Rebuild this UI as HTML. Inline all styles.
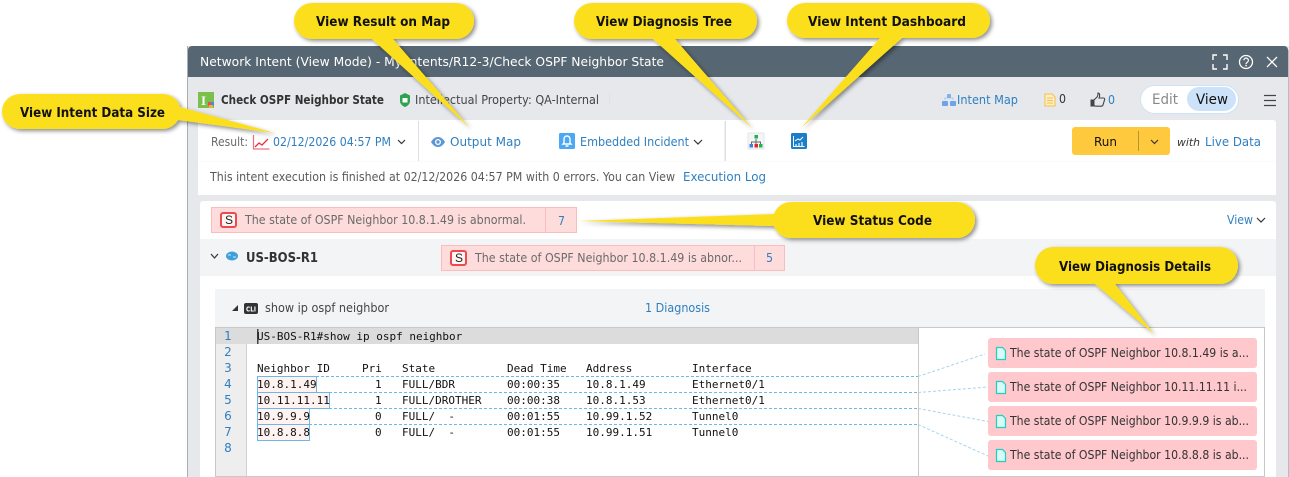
<!DOCTYPE html>
<html lang="en"><head><meta charset="utf-8"><title>Network Intent</title>
<style>
html,body{margin:0;padding:0;background:#fff;width:1289px;height:477px;overflow:hidden}
svg{display:block}
text{font-family:"DejaVu Sans","Liberation Sans",sans-serif;font-size:12px;fill:#444;white-space:pre}
.b{fill:#2f7fc0}
.w{fill:#fff}
.g6{fill:#6a6a6a}
.g5{fill:#5a5a5a}
.g3{fill:#333}
.h{font-weight:bold;fill:#333}
.c{font-weight:bold;fill:#111;font-size:13px}
.m{font-family:"DejaVu Sans Mono","Liberation Mono",monospace;font-size:11px;fill:#111}
.n{fill:#2f7fc0;font-size:12px;text-anchor:middle}
.ch{fill:none;stroke:#333;stroke-width:1.2}
</style></head>
<body>
<svg width="1289" height="477" viewBox="0 0 1289 477" xmlns="http://www.w3.org/2000/svg">
<defs><filter id="s" x="-10%" y="-20%" width="125%" height="150%"><feDropShadow dx="2" dy="2" stdDeviation="2" flood-color="#000" flood-opacity=".45"/></filter></defs>
<rect x="187" y="46" width="1102" height="431" fill="#e6e8ec"/>
<rect x="187" y="46" width="1" height="431" fill="#a9aeb3"/>
<path d="M188 77V50a4 4 0 0 1 4-4H1284a4 4 0 0 1 4 4V77Z" fill="#566672"/>
<rect x="1288" y="50" width="1" height="427" fill="#b8bcc0"/>
<text class="w" x="200" y="66" textLength="464" lengthAdjust="spacingAndGlyphs">Network Intent (View Mode) - My Intents/R12-3/Check OSPF Neighbor State</text>
<path d="M1213 60v-5h4M1223 55h4v5M1227 64v5h-4M1217 69h-4v-5" fill="none" stroke="#fff" stroke-width="1.4"/>
<circle cx="1246" cy="62" r="6.5" fill="none" stroke="#fff" stroke-width="1.3"/>
<path d="M1243.800 60.300a2.300 2.300 0 1 1 3.500 2c-.9.6-1.300 1-1.300 2" fill="none" stroke="#fff" stroke-width="1.200"/><rect x="1245.300" y="65" width="1.400" height="1.400" fill="#fff"/>
<path d="M1267 57l10 10M1277 57l-10 10" stroke="#fff" stroke-width="1.300"/>

<rect x="198" y="92" width="16" height="16" fill="#7cc04c"/>
<text x="201" y="105" style="font-family:'Liberation Serif',serif;font-weight:bold;font-size:13px;fill:#fff">I</text>
<rect x="208" y="102" width="3" height="4" fill="#ef4b5c"/><rect x="211" y="102" width="3" height="4" fill="#3f8fe0"/><rect x="209" y="105" width="4" height="3" fill="#f3b12c"/>
<text class="h" x="221" y="104" textLength="163" lengthAdjust="spacingAndGlyphs">Check OSPF Neighbor State</text>
<path d="M405 93l5 2.500v5.500c0 3-2.500 5-5 6-2.500-1-5-3-5-6v-5.500z" fill="#2ea34f"/><rect x="402.500" y="98" width="5" height="4.500" fill="#fff"/>
<text x="415" y="104" textLength="184" lengthAdjust="spacingAndGlyphs">Intellectual Property: QA-Internal</text>
<rect x="609" y="93" width="1" height="11" fill="#e0e2e6"/>
<path d="M945 100v-2h8v2" fill="none" stroke="#a9c8ee"/><rect x="947" y="94" width="4" height="4" rx="1" fill="#7fb0ea"/><rect x="942" y="101" width="6" height="5" rx="1" fill="#6ea5e8"/><rect x="950" y="101" width="6" height="5" rx="1" fill="#6ea5e8"/>
<text class="b" x="957" y="104" textLength="61" lengthAdjust="spacingAndGlyphs">Intent Map</text>
<path d="M1045 94h7l3 3v9h-10z" fill="#fdf0c4" stroke="#f2bf4a"/><path d="M1047 98h6M1047 100.500h6M1047 103h6" stroke="#f2bf4a"/>
<text class="g3" x="1059" y="103" textLength="7" lengthAdjust="spacingAndGlyphs">0</text>
<path d="M1091 100h3v6h-3z" fill="#444" stroke="#444"/><path d="M1094 100l3-3c1-1 1-3 1-4 2 0 2 3 1 5h4.500c1 0 1.500 1 1 2l-1.500 5c-.3.800-1 1.200-2 1.200h-5c-1 0-2-.5-3-1.200" fill="none" stroke="#444" stroke-width="1.100"/>
<text class="b" x="1108" y="104" textLength="7" lengthAdjust="spacingAndGlyphs">0</text>
<rect x="1140.500" y="85.500" width="98" height="28" rx="14" fill="#fff" stroke="#cfe3f7"/>
<rect x="1187" y="87" width="49" height="24" rx="12" fill="#cbe2f8"/>
<text x="1152" y="104" textLength="26" lengthAdjust="spacingAndGlyphs" style="font-size:14px;fill:#888">Edit</text>
<text x="1196" y="104" textLength="32" lengthAdjust="spacingAndGlyphs" style="font-size:14px;fill:#111">View</text>
<path d="M1264 95.500h12M1264 100.500h12M1264 105.500h12" stroke="#444" stroke-width="1.300"/>

<path d="M198 161V123a3 3 0 0 1 3-3H1273a3 3 0 0 1 3 3V161Z" fill="#fff"/>
<rect x="198" y="162" width="1078" height="33" fill="#fff"/>
<rect x="198" y="161" width="1078" height="1" fill="#fafafa"/>
<text class="g6" x="211" y="146" textLength="37" lengthAdjust="spacingAndGlyphs">Result:</text>
<rect x="253" y="134" width="16" height="16" fill="#fff"/>
<path d="M253.500 135v14h16" fill="none" stroke="#f0707a" stroke-width="1.200"/><path d="M255 147l4-4 3 2 6-6" fill="none" stroke="#e8303f" stroke-width="1.300"/>
<text class="b" x="273" y="146" textLength="118" lengthAdjust="spacingAndGlyphs">02/12/2026 04:57 PM</text>
<path class="ch" d="M398 140l3.500 3.500 3.500-3.500"/>
<rect x="418" y="121" width="1" height="40" fill="#dddfe2"/>
<path d="M431 142c2-3.500 4.500-5 7-5s5 1.500 7 5c-2 3.500-4.500 5-7 5s-5-1.500-7-5z" fill="#5c96d6"/><circle cx="438" cy="142" r="3" fill="#fff"/><circle cx="438" cy="142" r="1.700" fill="#5c96d6"/>
<text class="b" x="450" y="146" textLength="71" lengthAdjust="spacingAndGlyphs">Output Map</text>
<rect x="559" y="133" width="16" height="16" rx="1.500" fill="#4aa8f5"/>
<path d="M564 143v-4a3 3 0 0 1 6 0v4l1 1h-8zM565.500 146h3" fill="none" stroke="#fff" stroke-width="1.400"/>
<text class="b" x="580" y="146" textLength="109" lengthAdjust="spacingAndGlyphs">Embedded Incident</text>
<path class="ch" d="M694 140l4 4 4-4"/>
<rect x="724.500" y="121" width="1.500" height="40" fill="#dddfe2"/>
<rect x="748" y="133" width="16" height="16" rx="1" fill="#f3f5f7" stroke="#e2e4e8"/>
<path d="M756 139v3M751.500 145v-3h9v3M756 142v3" fill="none" stroke="#666"/>
<rect x="754.500" y="135" width="3.500" height="3.500" fill="#22b14c"/><rect x="749.500" y="144" width="3.500" height="3.500" fill="#3f7fe0"/><rect x="754.500" y="144" width="3.500" height="3.500" fill="#e8202a"/><rect x="759" y="144" width="3.500" height="3.500" fill="#22b14c"/>
<rect x="791" y="133" width="16" height="16" rx="1.500" fill="#1b7ec8"/>
<path d="M793.500 136v10.500h11" fill="none" stroke="#fff"/><path d="M795 141l3-2 2 1 3-3" fill="none" stroke="#fff"/><path d="M796 146v-2M799 146v-3M802 146v-4" stroke="#bfe0f7" stroke-width="1.500"/>
<rect x="1072" y="127" width="98" height="28" rx="3" fill="#fec93c"/>
<rect x="1138" y="131" width="1" height="20" fill="#b8962e"/>
<text x="1094" y="146" textLength="23" lengthAdjust="spacingAndGlyphs" style="fill:#111">Run</text>
<path class="ch" d="M1151 140l3.500 3.500 3.500-3.500"/>
<text x="1177" y="146" textLength="23" lengthAdjust="spacingAndGlyphs" style="font-style:italic;font-size:11px;fill:#333">with</text>
<text class="b" x="1205" y="146" textLength="56" lengthAdjust="spacingAndGlyphs">Live Data</text>
<text class="g5" x="210" y="181" textLength="465" lengthAdjust="spacingAndGlyphs">This intent execution is finished at 02/12/2026 04:57 PM with 0 errors. You can View</text>
<text class="b" x="683" y="181" textLength="83" lengthAdjust="spacingAndGlyphs">Execution Log</text>

<path d="M200 239V204a3 3 0 0 1 3-3H1273a3 3 0 0 1 3 3V239Z" fill="#fff"/>
<rect x="200" y="239" width="1076" height="37" fill="#f3f4f6"/>
<rect x="200" y="276" width="1076" height="201" fill="#fff"/>
<rect x="211.500" y="207.500" width="365" height="25" fill="#ffdcdc" stroke="#fbbcbc"/>
<rect x="545" y="208" width="1" height="24" fill="#fbbcbc"/>
<rect x="221" y="213" width="15" height="14" rx="2" fill="#fff5f5" stroke="#f0484f" stroke-width="2"/>
<text x="225" y="224" style="font-family:'Liberation Sans',sans-serif;font-size:12px;fill:#222">S</text>
<text class="g6" x="245" y="224" textLength="281" lengthAdjust="spacingAndGlyphs">The state of OSPF Neighbor 10.8.1.49 is abnormal.</text>
<text class="b" x="558" y="225" textLength="7" lengthAdjust="spacingAndGlyphs">7</text>
<text class="b" x="1227" y="224" textLength="26" lengthAdjust="spacingAndGlyphs">View</text>
<path class="ch" d="M1257 218l4 4 4-4"/>

<path class="ch" d="M211 254l3.500 4 3.500-4"/>
<ellipse cx="232" cy="256" rx="6" ry="4.500" fill="#3f9fdc"/><path d="M228 255h3M233 257h3" stroke="#cfeafa"/>
<text class="h" x="246" y="262" textLength="72" lengthAdjust="spacingAndGlyphs" style="font-size:13.500px">US-BOS-R1</text>
<rect x="441.500" y="245.500" width="343" height="25" fill="#ffdcdc" stroke="#fbbcbc"/>
<rect x="754" y="246" width="1" height="24" fill="#fbbcbc"/>
<rect x="451" y="251" width="15" height="14" rx="2" fill="#fff5f5" stroke="#f0484f" stroke-width="2"/>
<text x="455" y="262" style="font-family:'Liberation Sans',sans-serif;font-size:12px;fill:#222">S</text>
<text class="g6" x="475" y="262" textLength="267" lengthAdjust="spacingAndGlyphs">The state of OSPF Neighbor 10.8.1.49 is abnor...</text>
<text class="b" x="766" y="262" textLength="7" lengthAdjust="spacingAndGlyphs">5</text>

<rect x="215" y="289" width="1050" height="38" fill="#f3f4f6"/>
<path d="M232 311l6-6v6z" fill="#333"/>
<rect x="244" y="303" width="14" height="11" rx="2" fill="#333"/>
<text x="246" y="311.500" textLength="10" lengthAdjust="spacingAndGlyphs" style="font-size:7px;font-weight:bold;fill:#fff">CLI</text>
<text x="265" y="312" textLength="124" lengthAdjust="spacingAndGlyphs">show ip ospf neighbor</text>
<text class="b" x="645" y="312" textLength="65" lengthAdjust="spacingAndGlyphs">1 Diagnosis</text>

<rect x="215.500" y="327.500" width="1049" height="149" fill="#fff" stroke="#c8c8c8"/>
<rect x="216" y="328" width="31" height="148" fill="#eeeeee"/>
<rect x="246" y="328" width="1" height="148" fill="#d0d0d0"/>
<rect x="216" y="328" width="702" height="16" fill="#dcdcdc"/>
<rect x="918" y="328" width="1" height="148" fill="#c8c8c8"/>
<rect x="257" y="329" width="1.500" height="15" fill="#444"/>
<text class="n" x="228" y="340">1</text><text class="n" x="228" y="356">2</text><text class="n" x="228" y="372">3</text><text class="n" x="228" y="388">4</text><text class="n" x="228" y="404">5</text><text class="n" x="228" y="420">6</text><text class="n" x="228" y="436">7</text><text class="n" x="228" y="452">8</text>

<rect x="257.500" y="376.500" width="59" height="16" fill="#fff3f1" stroke="#6fb7e6"/>
<rect x="257.500" y="392.500" width="72" height="16" fill="#fff3f1" stroke="#6fb7e6"/>
<rect x="257.500" y="408.500" width="52" height="16" fill="#fff3f1" stroke="#6fb7e6"/>
<rect x="257.500" y="424.500" width="52" height="16" fill="#fff3f1" stroke="#6fb7e6"/>
<g fill="none" stroke="#6fb7e6" stroke-dasharray="3 2">
<path d="M316 376.500H918M329 392.500H918M309 408.500H918M309 424.500H918"/>
</g>
<g fill="none" stroke="#a8d4ef" stroke-dasharray="3 2">
<path d="M918 376.500L985 354M918 392.500L988 387M918 408.500L988 421.500M918 424.500L988 456"/>
</g>
<text class="m" x="257" y="340">US-BOS-R1#show ip ospf neighbor</text>
<text class="m" x="257" y="372">Neighbor ID</text><text class="m" x="362" y="372">Pri</text><text class="m" x="402" y="372">State</text><text class="m" x="507" y="372">Dead Time</text><text class="m" x="586" y="372">Address</text><text class="m" x="692" y="372">Interface</text>
<text class="m" x="257" y="388">10.8.1.49</text><text class="m" x="375" y="388">1</text><text class="m" x="402" y="388">FULL/BDR</text><text class="m" x="507" y="388">00:00:35</text><text class="m" x="586" y="388">10.8.1.49</text><text class="m" x="692" y="388">Ethernet0/1</text>
<text class="m" x="257" y="404">10.11.11.11</text><text class="m" x="375" y="404">1</text><text class="m" x="402" y="404">FULL/DROTHER</text><text class="m" x="507" y="404">00:00:38</text><text class="m" x="586" y="404">10.8.1.53</text><text class="m" x="692" y="404">Ethernet0/1</text>
<text class="m" x="257" y="420">10.9.9.9</text><text class="m" x="375" y="420">0</text><text class="m" x="402" y="420">FULL/  -</text><text class="m" x="507" y="420">00:01:55</text><text class="m" x="586" y="420">10.99.1.52</text><text class="m" x="692" y="420">Tunnel0</text>
<text class="m" x="257" y="436">10.8.8.8</text><text class="m" x="375" y="436">0</text><text class="m" x="402" y="436">FULL/  -</text><text class="m" x="507" y="436">00:01:55</text><text class="m" x="586" y="436">10.99.1.51</text><text class="m" x="692" y="436">Tunnel0</text>

<g fill="#fec8cd">
<rect x="988" y="338" width="269" height="30" rx="3"/><rect x="988" y="372" width="269" height="30" rx="3"/><rect x="988" y="406" width="269" height="30" rx="3"/><rect x="988" y="440" width="269" height="30" rx="3"/>
</g>
<g fill="#d8fbf6" stroke="#1fcfc0" stroke-width="1.200">
<path d="M996.500 347.500h6l3 3v9h-9z"/><path d="M996.500 381.500h6l3 3v9h-9z"/><path d="M996.500 415.500h6l3 3v9h-9z"/><path d="M996.500 449.500h6l3 3v9h-9z"/>
</g>
<text class="g3" x="1010" y="357" textLength="239" lengthAdjust="spacingAndGlyphs">The state of OSPF Neighbor 10.8.1.49 is a...</text>
<text class="g3" x="1010" y="391" textLength="237" lengthAdjust="spacingAndGlyphs">The state of OSPF Neighbor 10.11.11.11 i...</text>
<text class="g3" x="1010" y="425" textLength="239" lengthAdjust="spacingAndGlyphs">The state of OSPF Neighbor 10.9.9.9 is ab...</text>
<text class="g3" x="1010" y="459" textLength="239" lengthAdjust="spacingAndGlyphs">The state of OSPF Neighbor 10.8.8.8 is ab...</text>

<g fill="#fcdf1a" filter="url(#s)">
<path d="M20 94H163a18 17.500 0 0 1 17 13L275 133 178 120A18 17.500 0 0 1 163 129H20A18 17.500 0 0 1 20 94Z"/>
<path d="M312 3H456a18 18 0 0 1 0 36H393L470 128 372 39H312a18 18 0 0 1 0-36Z"/>
<path d="M592 3H739a18 18 0 0 1 0 36H675L752 128 653 39H592a18 18 0 0 1 0-36Z"/>
<path d="M805 3H972a18 17.500 0 0 1 0 35H902L801 128 880 38H805a18 17.500 0 0 1 0-35Z"/>
<path d="M791 202H957a18 18 0 0 1 0 36H791A18 18 0 0 1 774 226L578 221 774 214A18 18 0 0 1 791 202Z"/>
<path d="M1053 247H1220a18 18.500 0 0 1 0 37H1115L1154 334 1095 284H1053a18 18.500 0 0 1 0-37Z"/>
</g>
<text class="c" x="20" y="117" textLength="145" lengthAdjust="spacingAndGlyphs">View Intent Data Size</text>
<text class="c" x="316" y="26" textLength="134" lengthAdjust="spacingAndGlyphs">View Result on Map</text>
<text class="c" x="596" y="26" textLength="136" lengthAdjust="spacingAndGlyphs">View Diagnosis Tree</text>
<text class="c" x="808" y="26" textLength="158" lengthAdjust="spacingAndGlyphs">View Intent Dashboard</text>
<text class="c" x="813" y="225" textLength="119" lengthAdjust="spacingAndGlyphs">View Status Code</text>
<text class="c" x="1059" y="271" textLength="152" lengthAdjust="spacingAndGlyphs">View Diagnosis Details</text>
</svg>
</body></html>
